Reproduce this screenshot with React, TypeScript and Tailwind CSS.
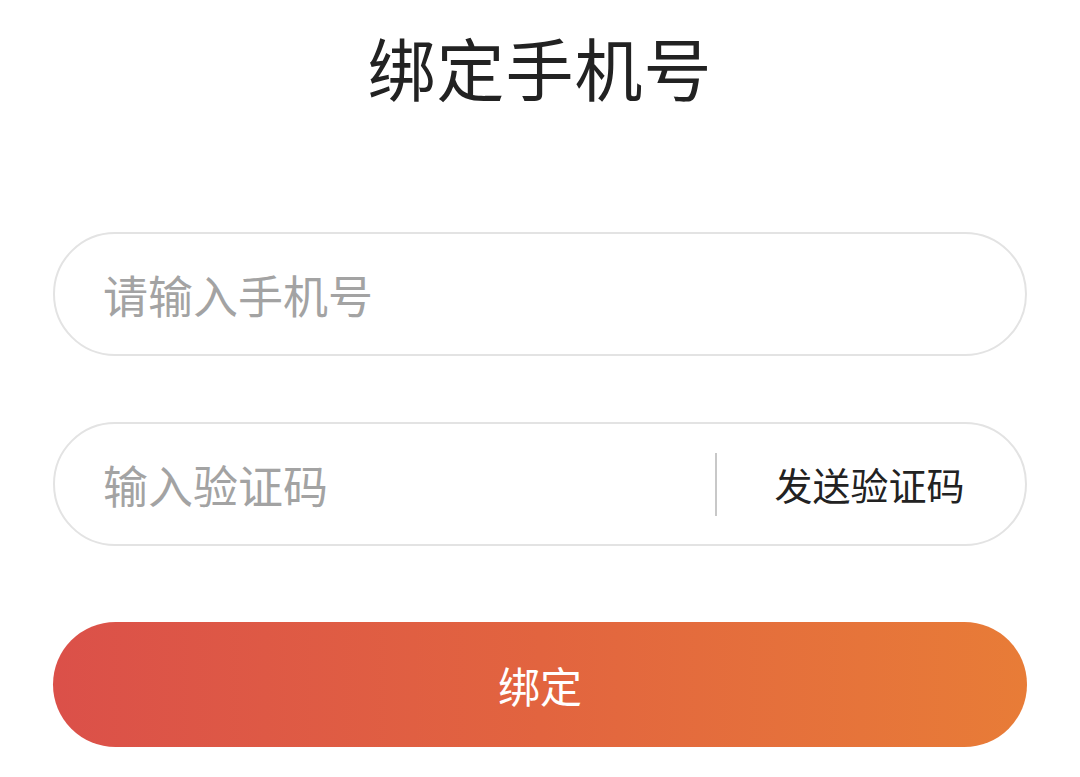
export default function App() {
  return (
    <div
      className="w-[1080px] h-[777px] bg-white overflow-hidden flex flex-col px-[53px]"
      style={{ fontFamily: '"Noto Sans CJK SC", "Noto Sans", sans-serif' }}
    >
      <h1 className="mt-[33px] h-[68px] text-[68px] leading-[68px] text-center text-[#222222] font-normal tracking-[1px]">
        绑定手机号
      </h1>
      <div className="mt-[131px] h-[124px] rounded-full border-2 border-[#e3e3e3] flex items-center pl-[48px]">
        <span className="text-[45px] leading-none text-[#a3a3a3]">请输入手机号</span>
      </div>
      <div className="mt-[66px] h-[124px] rounded-full border-2 border-[#e3e3e3] flex items-center pl-[48px]">
        <span className="flex-1 text-[45px] leading-none text-[#a3a3a3]">输入验证码</span>
        <div className="w-[2px] h-[63px] bg-[#c8c8c8]" />
        <span className="w-[308px] text-center text-[38px] leading-none text-[#222222] pr-[3px]">发送验证码</span>
      </div>
      <button className="mt-[76px] h-[125px] rounded-full bg-gradient-to-r from-[#db5049] via-[#e2643f] to-[#e87c37] flex items-center justify-center">
        <span className="text-[42px] leading-none text-white">绑定</span>
      </button>
    </div>
  );
}
